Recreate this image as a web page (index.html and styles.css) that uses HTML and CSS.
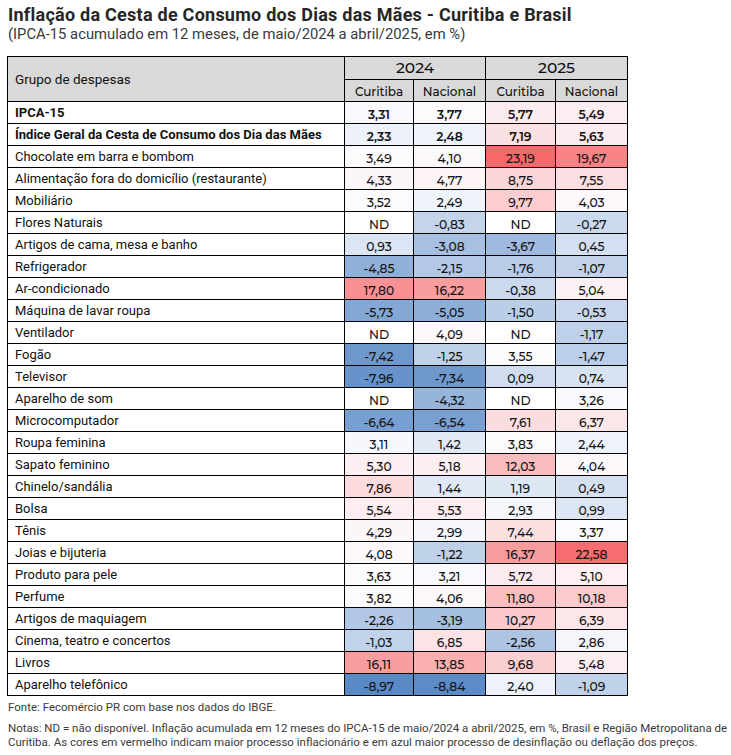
FILE: index.html
```html
<!DOCTYPE html>
<html lang="pt-BR">
<head>
<meta charset="utf-8">
<title>Inflação da Cesta de Consumo dos Dias das Mães</title>
<link rel="stylesheet" href="styles.css">
</head>
<body>
<div class="page">
  <h1 class="title">Inflação da Cesta de Consumo dos Dias das Mães - Curitiba e Brasil</h1>
  <p class="subtitle">(IPCA-15 acumulado em 12 meses, de maio/2024 a abril/2025, em %)</p>
  <table class="tbl">
    <colgroup>
      <col class="c-lbl"><col class="c-n1"><col class="c-n2"><col class="c-n3"><col class="c-n4">
    </colgroup>
    <thead>
      <tr class="hr1">
        <th rowspan="2" class="grp">Grupo de despesas</th>
        <th colspan="2" class="year">2024</th>
        <th colspan="2" class="year">2025</th>
      </tr>
      <tr class="hr2">
        <th class="sub">Curitiba</th><th class="sub">Nacional</th>
        <th class="sub">Curitiba</th><th class="sub">Nacional</th>
      </tr>
    </thead>
    <tbody>
      <tr class="strong"><td class="lbl">IPCA-15</td><td class="num">3,31</td><td class="num">3,77</td><td class="num">5,77</td><td class="num">5,49</td></tr>
      <tr class="strong"><td class="lbl">Índice Geral da Cesta de Consumo dos Dia das Mães</td><td class="num">2,33</td><td class="num">2,48</td><td class="num">7,19</td><td class="num">5,63</td></tr>
      <tr><td class="lbl">Chocolate em barra e bombom</td><td class="num">3,49</td><td class="num">4,10</td><td class="num">23,19</td><td class="num">19,67</td></tr>
      <tr><td class="lbl">Alimentação fora do domicílio (restaurante)</td><td class="num">4,33</td><td class="num">4,77</td><td class="num">8,75</td><td class="num">7,55</td></tr>
      <tr><td class="lbl">Mobiliário</td><td class="num">3,52</td><td class="num">2,49</td><td class="num">9,77</td><td class="num">4,03</td></tr>
      <tr><td class="lbl">Flores Naturais</td><td class="num">ND</td><td class="num">-0,83</td><td class="num">ND</td><td class="num">-0,27</td></tr>
      <tr><td class="lbl">Artigos de cama, mesa e banho</td><td class="num">0,93</td><td class="num">-3,08</td><td class="num">-3,67</td><td class="num">0,45</td></tr>
      <tr><td class="lbl">Refrigerador</td><td class="num">-4,85</td><td class="num">-2,15</td><td class="num">-1,76</td><td class="num">-1,07</td></tr>
      <tr><td class="lbl">Ar-condicionado</td><td class="num">17,80</td><td class="num">16,22</td><td class="num">-0,38</td><td class="num">5,04</td></tr>
      <tr><td class="lbl">Máquina de lavar roupa</td><td class="num">-5,73</td><td class="num">-5,05</td><td class="num">-1,50</td><td class="num">-0,53</td></tr>
      <tr><td class="lbl">Ventilador</td><td class="num">ND</td><td class="num">4,09</td><td class="num">ND</td><td class="num">-1,17</td></tr>
      <tr><td class="lbl">Fogão</td><td class="num">-7,42</td><td class="num">-1,25</td><td class="num">3,55</td><td class="num">-1,47</td></tr>
      <tr><td class="lbl">Televisor</td><td class="num">-7,96</td><td class="num">-7,34</td><td class="num">0,09</td><td class="num">0,74</td></tr>
      <tr><td class="lbl">Aparelho de som</td><td class="num">ND</td><td class="num">-4,32</td><td class="num">ND</td><td class="num">3,26</td></tr>
      <tr><td class="lbl">Microcomputador</td><td class="num">-6,64</td><td class="num">-6,54</td><td class="num">7,61</td><td class="num">6,37</td></tr>
      <tr><td class="lbl">Roupa feminina</td><td class="num">3,11</td><td class="num">1,42</td><td class="num">3,83</td><td class="num">2,44</td></tr>
      <tr><td class="lbl">Sapato feminino</td><td class="num">5,30</td><td class="num">5,18</td><td class="num">12,03</td><td class="num">4,04</td></tr>
      <tr><td class="lbl">Chinelo/sandália</td><td class="num">7,86</td><td class="num">1,44</td><td class="num">1,19</td><td class="num">0,49</td></tr>
      <tr><td class="lbl">Bolsa</td><td class="num">5,54</td><td class="num">5,53</td><td class="num">2,93</td><td class="num">0,99</td></tr>
      <tr><td class="lbl">Tênis</td><td class="num">4,29</td><td class="num">2,99</td><td class="num">7,44</td><td class="num">3,37</td></tr>
      <tr><td class="lbl">Joias e bijuteria</td><td class="num">4,08</td><td class="num">-1,22</td><td class="num">16,37</td><td class="num">22,58</td></tr>
      <tr><td class="lbl">Produto para pele</td><td class="num">3,63</td><td class="num">3,21</td><td class="num">5,72</td><td class="num">5,10</td></tr>
      <tr><td class="lbl">Perfume</td><td class="num">3,82</td><td class="num">4,06</td><td class="num">11,80</td><td class="num">10,18</td></tr>
      <tr><td class="lbl">Artigos de maquiagem</td><td class="num">-2,26</td><td class="num">-3,19</td><td class="num">10,27</td><td class="num">6,39</td></tr>
      <tr><td class="lbl">Cinema, teatro e concertos</td><td class="num">-1,03</td><td class="num">6,85</td><td class="num">-2,56</td><td class="num">2,86</td></tr>
      <tr><td class="lbl">Livros</td><td class="num">16,11</td><td class="num">13,85</td><td class="num">9,68</td><td class="num">5,48</td></tr>
      <tr><td class="lbl">Aparelho telefônico</td><td class="num">-8,97</td><td class="num">-8,84</td><td class="num">2,40</td><td class="num">-1,09</td></tr>
    </tbody>
  </table>
  <p class="source">Fonte: Fecomércio PR com base nos dados do IBGE.</p>
  <p class="notes">Notas: ND = não disponível. Inflação acumulada em 12 meses do IPCA-15 de maio/2024 a abril/2025, em %, Brasil e Região Metropolitana de Curitiba. As cores em vermelho indicam maior processo inflacionário e em azul maior processo de desinflação ou deflação dos preços.</p>
</div>
<script src="script.js"></script>
</body>
</html>
```
FILE: styles.css
```css
* { box-sizing: border-box; }
body {
  margin: 0;
  background: #ffffff;
  color: #1f1f1f;
  font-family: Roboto, "Liberation Sans", sans-serif;
}
.page {
  padding: 5px 0 0 7px;
}
.title {
  margin: 0;
  padding-left: 1px;
  font-family: Roboto, sans-serif;
  font-weight: 700;
  font-size: 18px;
  line-height: 20px;
  letter-spacing: 0.25px;
  color: #262626;
}
.subtitle {
  margin: 0;
  padding-left: 1px;
  font-size: 14.8px;
  line-height: 18px;
  color: #3a3a3a;
}
.tbl {
  margin-top: 13px;
  border-collapse: collapse;
  table-layout: fixed;
  width: 620px;
}
.c-lbl { width: 337px; }
.c-n1 { width: 69px; }
.c-n2 { width: 72px; }
.c-n3 { width: 70px; }
.c-n4 { width: 72px; }
.tbl th, .tbl td {
  border: 1px solid #000;
  padding: 0;
}
.tbl thead th {
  background: #d9d9d9;
  font-weight: 400;
  color: #111;
}
.hr1 { height: 23px; }
.hr2 { height: 22px; }
.grp {
  text-align: left;
  padding-left: 7px !important;
  font-size: 13.5px;
  vertical-align: middle;
}
.tbl thead .year {
  font-family: Montserrat, sans-serif;
  font-size: 15.5px;
  font-weight: 500;
  line-height: 18px;
  text-align: center;
}
.tbl thead .sub {
  font-family: Montserrat, sans-serif;
  font-size: 12px;
  font-weight: 500;
  line-height: 14px;
  text-align: center;
  vertical-align: bottom;
  padding-bottom: 2px;
}
.tbl tbody tr { height: 22px; }
.lbl {
  padding-left: 7px !important;
  font-size: 13px;
  line-height: 16px;
  vertical-align: middle;
  white-space: nowrap;
  color: #111;
}
.strong .lbl { font-weight: 700; }
.num {
  font-family: Montserrat, sans-serif;
  font-size: 12.3px;
  font-weight: 500;
  line-height: 14px;
  text-align: center;
  vertical-align: bottom;
  padding-bottom: 1px !important;
  color: #141414;
}
.strong .num { font-weight: 600; }
.source {
  margin: 4px 0 0 1px;
  font-size: 11.5px;
  line-height: 14px;
  color: #3a3a3a;
}
.notes {
  margin: 7px 0 0 1px;
  font-size: 11.5px;
  line-height: 14px;
  color: #3a3a3a;
}
```
FILE: script.js
```js
(function () {
  var MID = 3.5;
  var white = [252, 252, 255];
  var red = [248, 105, 107];
  var blue = [90, 138, 198];
  var cells = document.querySelectorAll('.tbl td.num');
  var vals = [];
  cells.forEach(function (c) {
    var t = c.textContent.trim();
    if (t !== 'ND') vals.push(parseFloat(t.replace(',', '.')));
  });
  var max = Math.max.apply(null, vals);
  var min = Math.min.apply(null, vals);
  function mix(a, b, f) {
    return a.map(function (x, i) { return Math.round(x + (b[i] - x) * f); });
  }
  cells.forEach(function (c) {
    var t = c.textContent.trim();
    if (t === 'ND') return;
    var v = parseFloat(t.replace(',', '.'));
    var col;
    if (v >= MID) col = mix(white, red, (v - MID) / (max - MID));
    else col = mix(white, blue, (MID - v) / (MID - min));
    c.style.backgroundColor = 'rgb(' + col.join(',') + ')';
  });
})();
```
